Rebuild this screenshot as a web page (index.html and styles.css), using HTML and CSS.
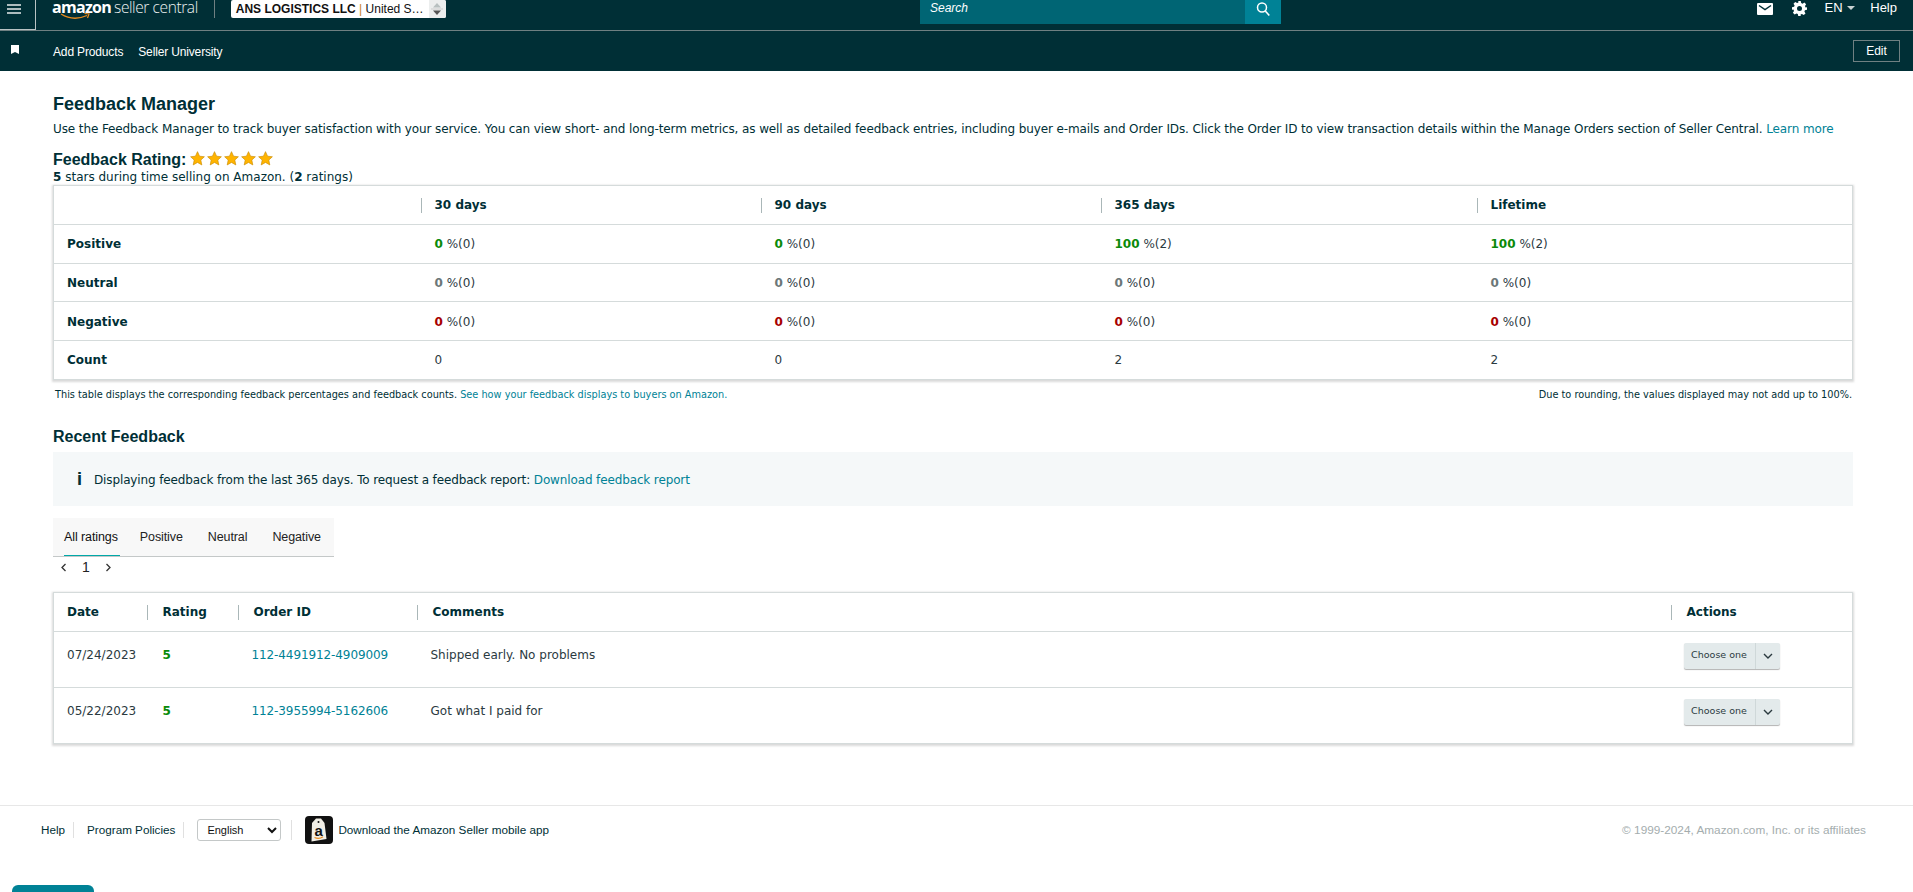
FILE: index.html
```html
<!DOCTYPE html>
<html lang="en">
<head>
  <meta charset="UTF-8" />
  <meta name="viewport" content="width=device-width, initial-scale=1" />
  <title>Feedback Manager</title>
  <link rel="stylesheet" href="styles.css">
</head>
<body>
  <header class="nav">
    <div class="nav-top">
      <div class="nav-left">
        <button class="menu-btn" aria-label="Menu">
          <svg width="14" height="10" viewBox="0 0 14 10"><path d="M0 1h14M0 5h14M0 9h14" stroke="#e6ecec" stroke-width="1.4"/></svg>
        </button>
        <div class="logo">
          <span class="logo-amazon">amazon
            <svg class="logo-smile" width="31" height="7" viewBox="0 0 31 7"><path d="M1 1c8 5 17 5.500 26 1.500" fill="none" stroke="#e88b1f" stroke-width="1.300"/><path d="M24.500 0.500l4.500 0.500-1.500 4" fill="none" stroke="#e88b1f" stroke-width="1.200"/></svg>
          </span>
          <span class="logo-seller">seller central</span>
        </div>
        <div class="nav-divider"></div>
        <div class="account-picker">
          <span class="account-text"><b>ANS LOGISTICS LLC</b> <i>|</i> United S…</span>
          <span class="account-arrows">
            <svg width="14" height="14" viewBox="0 0 14 14"><path d="M7 1l4 4.500H3z" fill="#b8c0c0"/><path d="M1 7h12" stroke="#ccc"/><path d="M7 13l-4-4.500h8z" fill="#555"/></svg>
          </span>
        </div>
      </div>
      <div class="search">
        <span class="search-text">Search</span>
        <span class="search-btn">
          <svg width="14" height="16" viewBox="0 0 14 16"><circle cx="6" cy="6.500" r="4.500" fill="none" stroke="#fff" stroke-width="1.500"/><path d="M9.300 10l4 4.500" stroke="#fff" stroke-width="1.600"/></svg>
        </span>
      </div>
      <div class="nav-right">
        <svg class="icon-mail" width="16" height="12" viewBox="0 0 16 12"><path d="M1 0h14a1 1 0 0 1 1 1v10a1 1 0 0 1-1 1H1a1 1 0 0 1-1-1V1a1 1 0 0 1 1-1z" fill="#fff"/><path d="M2 2.500l6 4 6-4" fill="none" stroke="#002f36" stroke-width="1.500"/></svg>
        <svg class="icon-gear" width="15" height="15" viewBox="0 0 24 24"><path fill="#fff" fill-rule="evenodd" d="M10 0h4l.7 3.300 2.200.9 2.900-1.800 2.800 2.800-1.800 2.900.9 2.200L24 10v4l-3.300.7-.9 2.200 1.800 2.900-2.800 2.800-2.900-1.800-2.200.9L14 24h-4l-.7-3.300-2.200-.9-2.900 1.800-2.800-2.800 1.800-2.900-.9-2.200L0 14v-4l3.300-.7.9-2.200-1.800-2.900 2.800-2.800 2.900 1.800 2.200-.9zM12 8a4 4 0 1 0 0 8 4 4 0 0 0 0-8z"/></svg>
        <span class="lang">EN <span class="caret"></span></span>
        <span class="help">Help</span>
      </div>
    </div>
    <div class="nav-bottom">
      <div class="shortcuts">
        <svg class="icon-bookmark" width="8" height="9" viewBox="0 0 8 9"><path d="M0 0h8v9L4 7 0 9z" fill="#fff"/></svg>
        <a href="#">Add Products</a>
        <a href="#">Seller University</a>
      </div>
      <button class="edit-btn">Edit</button>
    </div>
  </header>

  <main class="page">
    <h1>Feedback Manager</h1>
    <p class="intro">Use the Feedback Manager to track buyer satisfaction with your service. You can view short- and long-term metrics, as well as detailed feedback entries, including buyer e-mails and Order IDs. Click the Order ID to view transaction details within the Manage Orders section of Seller Central. <a href="#">Learn more</a></p>

    <div class="rating-line">
      <span class="rating-label">Feedback Rating:</span>
      <span class="stars">
        <svg width="15" height="15" viewBox="0 0 24 24"><path class="star" d="M12 1l3.300 7.300 7.700.9-5.700 5.300 1.600 7.800L12 18.300 5.100 22.300l1.600-7.800L1 9.200l7.700-.9z"/></svg>
        <svg width="15" height="15" viewBox="0 0 24 24"><path class="star" d="M12 1l3.300 7.300 7.700.9-5.700 5.300 1.600 7.800L12 18.300 5.100 22.300l1.600-7.800L1 9.200l7.700-.9z"/></svg>
        <svg width="15" height="15" viewBox="0 0 24 24"><path class="star" d="M12 1l3.300 7.300 7.700.9-5.700 5.300 1.600 7.800L12 18.300 5.100 22.300l1.600-7.800L1 9.200l7.700-.9z"/></svg>
        <svg width="15" height="15" viewBox="0 0 24 24"><path class="star" d="M12 1l3.300 7.300 7.700.9-5.700 5.300 1.600 7.800L12 18.300 5.100 22.300l1.600-7.800L1 9.200l7.700-.9z"/></svg>
        <svg width="15" height="15" viewBox="0 0 24 24"><path class="star" d="M12 1l3.300 7.300 7.700.9-5.700 5.300 1.600 7.800L12 18.300 5.100 22.300l1.600-7.800L1 9.200l7.700-.9z"/></svg>
      </span>
    </div>
    <p class="rating-sub"><b>5</b> stars during time selling on Amazon. (<b>2</b> ratings)</p>

    <table class="card metrics">
      <colgroup>
        <col class="m-c1"><col class="m-c2"><col class="m-c3"><col class="m-c4"><col>
      </colgroup>
      <thead>
        <tr>
          <th></th>
          <th><span class="th-sep">30 days</span></th>
          <th><span class="th-sep">90 days</span></th>
          <th><span class="th-sep">365 days</span></th>
          <th><span class="th-sep">Lifetime</span></th>
        </tr>
      </thead>
      <tbody>
        <tr>
          <th>Positive</th>
          <td><b class="green">0</b> %(0)</td>
          <td><b class="green">0</b> %(0)</td>
          <td><b class="green">100</b> %(2)</td>
          <td><b class="green">100</b> %(2)</td>
        </tr>
        <tr>
          <th>Neutral</th>
          <td><b class="gray">0</b> %(0)</td>
          <td><b class="gray">0</b> %(0)</td>
          <td><b class="gray">0</b> %(0)</td>
          <td><b class="gray">0</b> %(0)</td>
        </tr>
        <tr>
          <th>Negative</th>
          <td><b class="red">0</b> %(0)</td>
          <td><b class="red">0</b> %(0)</td>
          <td><b class="red">0</b> %(0)</td>
          <td><b class="red">0</b> %(0)</td>
        </tr>
        <tr>
          <th>Count</th>
          <td>0</td>
          <td>0</td>
          <td>2</td>
          <td>2</td>
        </tr>
      </tbody>
    </table>

    <div class="table-note">
      <span>This table displays the corresponding feedback percentages and feedback counts. <a href="#">See how your feedback displays to buyers on Amazon.</a></span>
      <span>Due to rounding, the values displayed may not add up to 100%.</span>
    </div>

    <h2>Recent Feedback</h2>
    <div class="info-box">
      <span class="info-icon">i</span>
      <span>Displaying feedback from the last 365 days. To request a feedback report: <a href="#">Download feedback report</a></span>
    </div>

    <div class="tabs">
      <span class="tab active">All ratings</span>
      <span class="tab">Positive</span>
      <span class="tab">Neutral</span>
      <span class="tab">Negative</span>
    </div>
    <div class="pager">
      <svg width="7" height="9" viewBox="0 0 7 9"><path d="M5.500 1L2 4.500 5.500 8" fill="none" stroke="#333" stroke-width="1.300"/></svg>
      <span>1</span>
      <svg width="7" height="9" viewBox="0 0 7 9"><path d="M1.500 1L5 4.500 1.500 8" fill="none" stroke="#333" stroke-width="1.300"/></svg>
    </div>

    <table class="card feedback">
      <colgroup>
        <col class="f-c1"><col class="f-c2"><col class="f-c3"><col class="f-c4"><col>
      </colgroup>
      <thead>
        <tr>
          <th>Date</th>
          <th><span class="th-sep">Rating</span></th>
          <th><span class="th-sep">Order ID</span></th>
          <th><span class="th-sep">Comments</span></th>
          <th><span class="th-sep">Actions</span></th>
        </tr>
      </thead>
      <tbody>
        <tr>
          <td>07/24/2023</td>
          <td><b class="green">5</b></td>
          <td><a href="#">112-4491912-4909009</a></td>
          <td>Shipped early. No problems</td>
          <td>
            <div class="choose">
              <span class="choose-label">Choose one</span>
              <span class="choose-arrow"><svg width="10" height="6" viewBox="0 0 10 6"><path d="M1 1l4 4 4-4" fill="none" stroke="#2b3a3f" stroke-width="1.400"/></svg></span>
            </div>
          </td>
        </tr>
        <tr>
          <td>05/22/2023</td>
          <td><b class="green">5</b></td>
          <td><a href="#">112-3955994-5162606</a></td>
          <td>Got what I paid for</td>
          <td>
            <div class="choose">
              <span class="choose-label">Choose one</span>
              <span class="choose-arrow"><svg width="10" height="6" viewBox="0 0 10 6"><path d="M1 1l4 4 4-4" fill="none" stroke="#2b3a3f" stroke-width="1.400"/></svg></span>
            </div>
          </td>
        </tr>
      </tbody>
    </table>
  </main>

  <footer class="footer">
    <div class="footer-left">
      <a href="#" class="foot-link">Help</a>
      <a href="#" class="foot-link">Program Policies</a>
      <select class="foot-lang"><option>English</option></select>
      <span class="foot-sep"></span>
      <span class="app-icon">
        <svg width="28" height="28" viewBox="0 0 28 28"><rect width="28" height="28" rx="4" fill="#111"/><path d="M11 2.500h5l3.500 4.500 2 16-15 2.500L7 7z" fill="#f2efe6"/><circle cx="13.500" cy="6" r="1" fill="#111"/><path d="M9.500 21.500c3 1.300 6 1 8.500-.8" fill="none" stroke="#e88b1f" stroke-width="1.200"/></svg>
        <span class="app-letter">a</span>
      </span>
      <span class="foot-app">Download the Amazon Seller mobile app</span>
    </div>
    <div class="copyright">© 1999-2024, Amazon.com, Inc. or its affiliates</div>
  </footer>

  <div class="bottom-tab"></div>
</body>
</html>
```

FILE: styles.css
```css
* {
  box-sizing: border-box;
}

html, body {
  height: 892px;
  overflow: hidden;
}

body {
  margin: 0;
  background: #fff;
  color: #002f36;
  font-family: "DejaVu Sans", Verdana, sans-serif;
  font-size: 12px;
  position: relative;
}

a {
  color: #008296;
  text-decoration: none;
}

/* top nav */
.nav {
  background: #002f36;
  height: 71px;
  color: #fff;
  font-family: "Liberation Sans", Arial, sans-serif;
}

.nav-top {
  height: 31px;
  border-bottom: 1px solid #6f8082;
  display: grid;
  grid-template-columns: 920px 361px 1fr;
}

.nav-left {
  display: flex;
  align-items: flex-start;
}

.menu-btn {
  width: 36px;
  height: 30px;
  background: none;
  border: 0;
  border-right: 1px solid #b9c3c4;
  border-bottom: 1px solid #b9c3c4;
  padding: 4px 0 0 7px;
  display: flex;
  align-items: flex-start;
  justify-content: flex-start;
}

.logo {
  margin-left: 16px;
  display: flex;
  align-items: baseline;
  gap: 3px;
  height: 18px;
  line-height: 15px;
  font-family: "Open Sans", sans-serif;
}

.logo-amazon {
  position: relative;
  font-size: 16px;
  font-weight: 700;
  letter-spacing: -0.7px;
  color: #fff;
}

.logo-smile {
  position: absolute;
  left: 8px;
  top: 13px;
}

.logo-seller {
  font-size: 15.500px;
  font-weight: 300;
  color: #eef2f2;
  letter-spacing: -0.4px;
}

.nav-divider {
  width: 1px;
  height: 18px;
  background: #6f8082;
  margin-left: 16px;
}

.account-picker {
  margin-left: 16px;
  width: 215px;
  height: 18px;
  background: #fff;
  border-radius: 2px;
  display: flex;
  justify-content: space-between;
  color: #111;
  font-size: 12px;
  line-height: 18px;
}

.account-text {
  padding-left: 5px;
}

.account-text b {
  font-weight: 700;
}

.account-text i {
  color: #c8832a;
  font-style: normal;
}

.account-arrows {
  width: 17px;
  background: #eceeee;
  display: flex;
  align-items: center;
  justify-content: center;
  border-radius: 0 2px 2px 0;
}

.search {
  display: flex;
  height: 24px;
  background: #006574;
}

.search-text {
  flex: 1;
  padding-left: 10px;
  font-style: italic;
  font-size: 12px;
  line-height: 17px;
}

.search-btn {
  width: 36px;
  background: #008296;
  display: flex;
  align-items: flex-start;
  justify-content: center;
  padding-top: 1px;
}

.nav-right {
  display: flex;
  justify-content: flex-end;
  align-items: flex-start;
  padding-right: 16px;
  font-size: 13px;
  line-height: 16px;
}

.icon-mail {
  margin-top: 3px;
}

.icon-gear {
  margin: 1px 0 0 19px;
}

.lang {
  margin-left: 18px;
}

.caret {
  display: inline-block;
  border: 4px solid transparent;
  border-top-color: #c9d3d4;
  border-bottom: 0;
  vertical-align: 2px;
  margin-left: 1px;
}

.help {
  margin-left: 15px;
}

.nav-bottom {
  height: 40px;
  display: flex;
  align-items: center;
  justify-content: space-between;
  padding-right: 13px;
}

.shortcuts {
  display: flex;
  align-items: center;
  font-size: 12px;
  letter-spacing: -0.15px;
  padding-top: 2px;
}

.shortcuts a {
  color: #fff;
  margin-right: 15px;
}

.icon-bookmark {
  margin: 0 34px 5px 11px;
}

.edit-btn {
  width: 47px;
  height: 22px;
  background: none;
  border: 1px solid #6f8082;
  color: #fff;
  font-family: "Liberation Sans", Arial, sans-serif;
  font-size: 12px;
  padding: 0;
}

/* page body */
.page {
  padding: 23px 60px 0 53px;
}

h1 {
  margin: 0;
  font-family: "Liberation Sans", Arial, sans-serif;
  font-size: 18px;
  line-height: 20px;
  font-weight: 700;
}

.intro {
  margin: 6px 0 0;
  line-height: 18px;
  font-size: 12px;
  letter-spacing: -0.105px;
  white-space: nowrap;
}

.rating-line {
  margin-top: 13px;
  display: flex;
  align-items: center;
  height: 18px;
}

.rating-label {
  font-family: "Liberation Sans", Arial, sans-serif;
  font-size: 16px;
  font-weight: 700;
}

.stars {
  display: flex;
  margin: -4px 0 0 4px;
  gap: 2px;
}

.star {
  fill: #ffb400;
  stroke: #c98a00;
  stroke-width: 1;
}

.rating-sub {
  margin: 1px 0 0;
  line-height: 14px;
  font-size: 12px;
}

.card {
  width: 1800px;
  border-collapse: collapse;
  table-layout: fixed;
  background: #fff;
  border: 1px solid #d5dbdb;
  box-shadow: 0 1px 2px 1px rgba(0, 0, 0, 0.15);
}

.card th, .card td {
  text-align: left;
  border-bottom: 1px solid #d5dbdb;
  padding: 1px 0 0;
  font-size: 12px;
}

.card td {
  color: #2b3a3f;
}

.card th {
  font-weight: 700;
}

.card tbody tr:last-child td,
.card tbody tr:last-child th {
  border-bottom: 0;
}

.th-sep {
  display: block;
  border-left: 1px solid #aab7b8;
  padding-left: 13px;
  line-height: 15px;
}

.metrics {
  margin-top: 1px;
}

.metrics thead tr {
  height: 39px;
}

.metrics tbody tr {
  height: 38.700px;
}

.metrics tbody th {
  padding-left: 13px;
}

.metrics td {
  padding-left: 14px;
}

.m-c1 { width: 367px; }
.m-c2 { width: 340px; }
.m-c3 { width: 340px; }
.m-c4 { width: 376px; }

.green { color: #0a8a0a; }
.gray { color: #6c7778; }
.red { color: #a80000; }

.table-note {
  width: 1800px;
  display: flex;
  justify-content: space-between;
  padding: 0 1px 0 2px;
  margin-top: 8px;
  font-size: 9.750px;
  line-height: 14px;
}

h2 {
  margin: 25px 0 0;
  font-family: "Liberation Sans", Arial, sans-serif;
  font-size: 16px;
  line-height: 20px;
  font-weight: 700;
}

.info-box {
  width: 1800px;
  height: 54px;
  margin-top: 5px;
  background: #f5f8f9;
  display: flex;
  align-items: center;
  padding: 2px 0 0 24px;
  letter-spacing: -0.13px;
}

.info-icon {
  font-family: "Liberation Sans", Arial, sans-serif;
  font-weight: 700;
  font-size: 18px;
  width: 17px;
  color: #002f36;
}

.tabs {
  margin-top: 12px;
  width: 281px;
  height: 39px;
  background: #f8f8f8;
  border-bottom: 1px solid #c4c8c8;
  display: flex;
  padding-left: 11px;
  gap: 25px;
  font-family: "Liberation Sans", Arial, sans-serif;
  font-size: 12.500px;
  color: #222;
}

.tab {
  line-height: 39px;
  height: 38px;
  letter-spacing: -0.1px;
}

.tab.active {
  border-bottom: 1px solid #00a8a8;
  color: #111;
  padding-right: 2px;
  margin-right: -5px;
}

.pager {
  display: flex;
  align-items: center;
  gap: 15px;
  padding: 0 0 3px 7px;
  height: 24px;
  font-family: "Liberation Sans", Arial, sans-serif;
  font-size: 14px;
  color: #222;
}

.feedback {
  margin-top: 11px;
}

.feedback thead tr {
  height: 39px;
}

.feedback tbody tr {
  height: 56px;
}

.feedback thead th:first-child {
  padding-left: 13px;
}

.feedback td {
  vertical-align: top;
  padding-top: 16px;
  padding-left: 14px;
}

.feedback td a {
  letter-spacing: -0.1px;
}

.feedback td:first-child {
  padding-left: 13px;
}

.feedback td:nth-child(2) {
  padding-left: 16px;
}

.feedback .th-sep {
  padding-left: 15px;
}

.f-c1 { width: 93px; }
.f-c2 { width: 91px; }
.f-c3 { width: 179px; }
.f-c4 { width: 1254px; }

.feedback td:last-child {
  padding-top: 11px;
  padding-left: 13px;
}

.choose {
  display: inline-flex;
  height: 26px;
  background: #e3eaeb;
  border-radius: 2px;
  box-shadow: 0 1px 1px rgba(0, 0, 0, 0.3);
  font-size: 9.500px;
  line-height: 24px;
  color: #2b3a3f;
}

.choose-label {
  width: 72px;
  text-align: center;
  border-right: 1px solid #cfd8d9;
}

.choose-arrow {
  width: 24px;
  display: flex;
  align-items: center;
  justify-content: center;
}

/* footer */
.footer {
  position: absolute;
  left: 0;
  right: 0;
  top: 805px;
  height: 48px;
  border-top: 1px solid #e7e7e7;
  display: flex;
  justify-content: space-between;
  align-items: center;
  padding: 0 47px 0 41px;
  font-family: "Liberation Sans", Arial, sans-serif;
  font-size: 11.700px;
}

.footer-left {
  display: flex;
  align-items: center;
}

.foot-link {
  color: #002f36;
  padding-right: 8px;
  margin-right: 13px;
  border-right: 1px solid #e0e0e0;
  line-height: 16px;
}

.foot-lang {
  width: 84px;
  height: 22px;
  background: #fff;
  border: 1px solid #c4c8c8;
  border-radius: 3px;
  font-family: "Liberation Sans", Arial, sans-serif;
  font-size: 11px;
  padding-left: 5px;
  color: #111;
}

.foot-sep {
  width: 1px;
  height: 20px;
  background: #e0e0e0;
  margin: 0 10px;
}

.app-icon {
  position: relative;
  width: 28px;
  height: 28px;
  margin: 0 5px 0 3px;
}

.app-icon svg {
  display: block;
}

.app-letter {
  position: absolute;
  left: 9px;
  top: 7px;
  font-weight: 700;
  font-size: 15px;
  line-height: 15px;
  color: #111;
}

.foot-app {
  color: #002f36;
}

.copyright {
  color: #a4adae;
  font-size: 11.800px;
}

.bottom-tab {
  position: absolute;
  left: 12px;
  top: 885px;
  width: 82px;
  height: 20px;
  background: #008296;
  border-radius: 6px 6px 0 0;
}
```
